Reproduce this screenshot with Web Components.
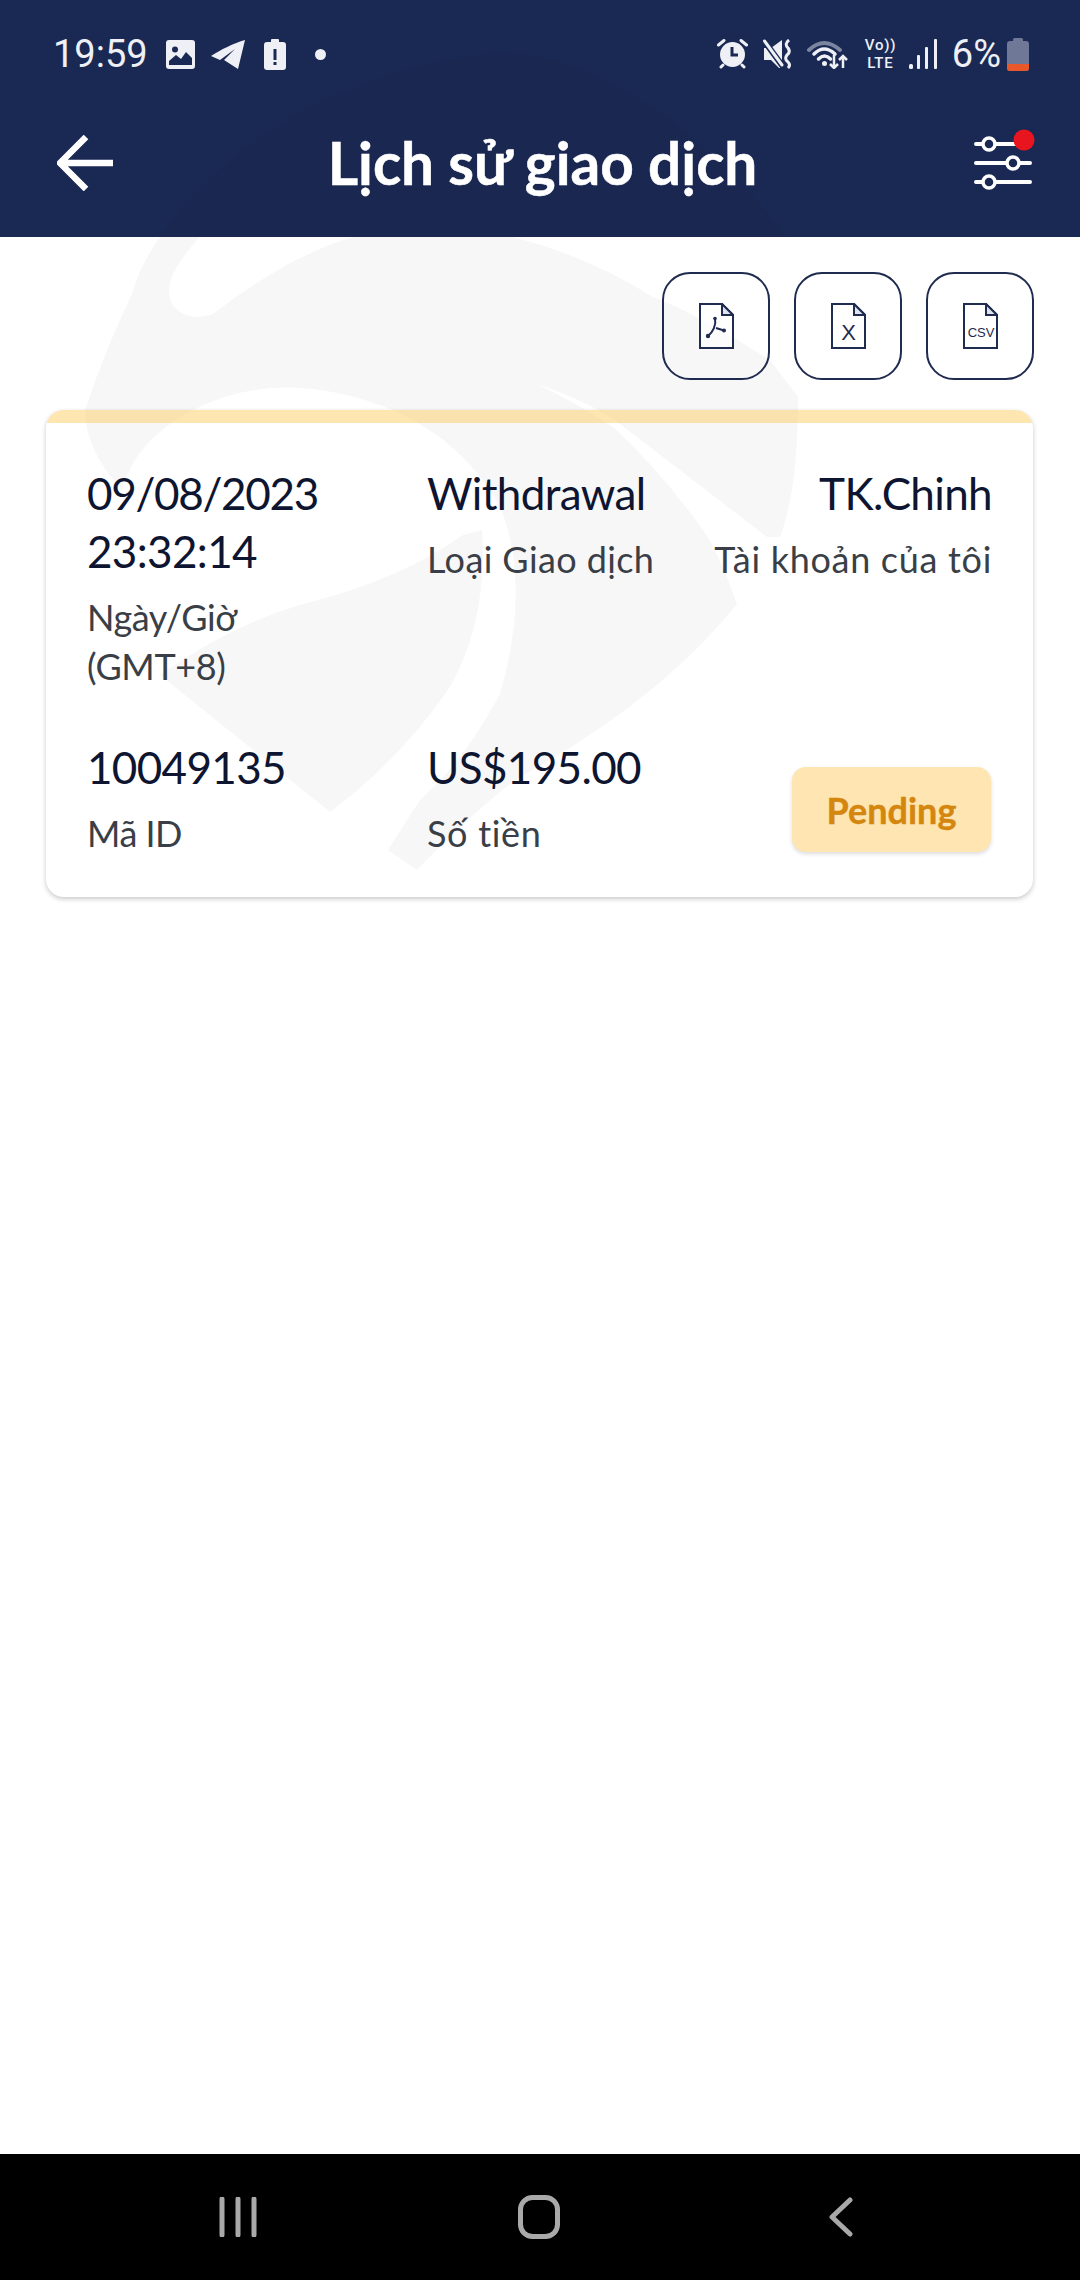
<!DOCTYPE html>
<html lang="vi">
<head>
<meta charset="utf-8">
<title>Lịch sử giao dịch</title>
<style>
    html, body { margin: 0; padding: 0; background: #fff; }
</style>
</head>
<body>
<history-page>
    <app-header slot="header" title-text="Lịch sử giao dịch"></app-header>
    <export-bar>
        <export-button kind="pdf"></export-button>
        <export-button kind="xls"></export-button>
        <export-button kind="csv"></export-button>
    </export-bar>
    <tx-card>
        <tx-field label="Ngày/Giờ (GMT+8)" style="--label-width: 150px; --label-spacing: -.4px; --value-width: 250px"><span style="letter-spacing: -1.3px">09/08/2023</span> 23:32:14</tx-field>
        <tx-field label="Loại Giao dịch" style="--label-spacing: .4px">Withdrawal</tx-field>
        <tx-field label="Tài khoản của tôi" align="right" style="--label-spacing: .7px">TK.Chinh</tx-field>
        <tx-field label="Mã ID" style="--label-spacing: -.5px">10049135</tx-field>
        <tx-field label="Số tiền" style="--label-spacing: .7px">US$195.00</tx-field>
        <status-badge>Pending</status-badge>
    </tx-card>
    <nav-bar slot="footer"></nav-bar>
</history-page>

<script>
const FONT = `Lato, 'Noto Sans', sans-serif`;

const pageTemplate = document.createElement('template');
pageTemplate.innerHTML = `
    <style>
        :host {
            display: flex;
            flex-direction: column;
            position: relative;
            width: 1080px;
            height: 2280px;
            overflow: hidden;
            background: #fff;
        }
        .watermark {
            position: absolute;
            left: 0;
            top: 0;
            width: 1080px;
            height: 900px;
        }
        main {
            position: relative;
            flex: 1;
            display: flex;
            flex-direction: column;
            gap: 31px;
            padding: 35px 47px 0 46px;
        }
    </style>
    <slot name="header"></slot>
    <svg class="watermark" viewBox="0 0 1080 900">
        <path fill="#f7f7f8" d="M160 237 Q140 265 132 294 Q105 350 85 410 Q85 450 122 490 Q135 440 193 410 Q280 365 393 410 Q470 445 503 514 Q530 590 500 694 Q465 760 420 800 L388 850 L417 870 Q480 805 520 777 Q660 700 737 604 Q720 555 703 530 Q660 470 613 427 Q575 402 537 384 Q590 402 620 424 L767 537 L780 537 Q798 490 798 397 L770 360 Q690 310 653 297 Q590 257 513 237 L353 237 Q290 255 213 314 Q190 322 175 308 Q155 285 200 237 Z"/>
        <path fill="#f7f7f8" d="M160 675 Q230 625 303 604 Q400 580 463 535 L482 530 Q488 620 450 687 Q400 760 330 812 Z"/>
    </svg>
    <main><slot></slot></main>
    <slot name="footer"></slot>
`;

class HistoryPage extends HTMLElement {
    constructor() {
        super();
        this.attachShadow({ mode: 'open' });
        this.shadowRoot.appendChild(pageTemplate.content.cloneNode(true));
    }
}

const headerTemplate = document.createElement('template');
headerTemplate.innerHTML = `
    <style>
        :host {
            display: block;
            position: relative;
            height: 237px;
            background: #1a2954;
            color: #eef0f5;
            overflow: hidden;
        }
        .shade { position: absolute; left: 0; top: 0; }
        .status {
            position: relative;
            display: flex;
            align-items: center;
            height: 108px;
            padding: 0 51px 0 53px;
            font-family: Roboto, sans-serif;
            font-size: 38px;
        }
        .status svg { display: block; flex: none; }
        .left, .right { display: flex; align-items: center; }
        .right { margin-left: auto; }
        .lte {
            font-weight: 500;
            font-size: 15px;
            line-height: 18px;
            letter-spacing: .8px;
            text-align: center;
            width: 31px;
            margin: 0 13px 0 17px;
        }
        .bar {
            position: relative;
            display: flex;
            align-items: center;
            height: 110px;
            padding: 0 48px 19px 57px;
        }
        .bar h1 {
            flex: 1;
            margin: 0 0 3px;
            color: #fff;
            text-align: center;
            font-family: ${FONT};
            font-size: 58.5px;
            font-weight: 700;
            -webkit-text-stroke: .5px #fff;
        }
    </style>
    <svg class="shade" width="1080" height="237" viewBox="0 0 1080 237">
        <path fill="#192751" d="M160 237 Q200 180 267 133 Q367 70 480 55 Q552 45 640 100 Q730 160 785 237 Z"/>
    </svg>
    <div class="status">
        <div class="left">
            <span class="time">19:59</span>
            <svg width="29" height="29" viewBox="0 0 29 29" style="margin-left:18px">
                <rect width="29" height="29" rx="3" fill="#eef0f5"/>
                <circle cx="9" cy="9.5" r="3" fill="#1a2954"/>
                <path d="M3 25 V21 L10 15 L15 19 L20 12 L26 18 V25 Z" fill="#1a2954"/>
            </svg>
            <svg width="35" height="30" viewBox="0 0 35 30" style="margin-left:15px">
                <path fill="#eef0f5" d="M1 17 C10 11 24 4 35 1 L28 30 L14 21 L25 10 L10 21 Z"/>
            </svg>
            <svg width="22" height="31" viewBox="0 0 22 31" style="margin-left:19px">
                <rect x="7" width="8" height="5" rx="1" fill="#eef0f5"/>
                <rect y="3" width="22" height="28" rx="3" fill="#eef0f5"/>
                <rect x="9.5" y="10" width="3" height="11" fill="#1a2954"/>
                <rect x="9.5" y="23" width="3" height="3" fill="#1a2954"/>
            </svg>
            <svg width="11" height="11" viewBox="0 0 11 11" style="margin-left:29px">
                <circle cx="5.5" cy="5.5" r="5.5" fill="#eef0f5"/>
            </svg>
        </div>
        <div class="right">
            <svg width="31" height="30" viewBox="0 0 31 30">
                <circle cx="15.5" cy="15.5" r="12.5" fill="#eef0f5"/>
                <path d="M15 8 V16 H21" fill="none" stroke="#1a2954" stroke-width="3"/>
                <path d="M1.5 6 L7 1.5 M29.5 6 L24 1.5 M6 26 L4 28 M25 26 L27 28" stroke="#eef0f5" stroke-width="3" stroke-linecap="round"/>
            </svg>
            <svg width="29" height="30" viewBox="0 0 29 30" style="margin-left:15px">
                <path fill="#eef0f5" d="M1 9 H8 L19 1 V29 H16 L8 21 H1 Z"/>
                <path d="M2 3 L21 29" stroke="#1a2954" stroke-width="6"/>
                <path d="M1.5 2 L19 26" stroke="#eef0f5" stroke-width="3" stroke-linecap="round"/>
                <path d="M26 1 Q21 5 25 9 Q28 13 24 16 Q21 20 25 23 Q28 26 25 29" fill="none" stroke="#eef0f5" stroke-width="3"/>
            </svg>
            <svg width="41" height="30" viewBox="0 0 41 30" style="margin-left:15px">
                <path d="M2 11 Q17 -3 33 11" fill="none" stroke="#7c859f" stroke-width="4" stroke-linecap="round"/>
                <path d="M7 15 Q17 5 28 15 M11.5 20 Q17.5 14 23.5 20" fill="none" stroke="#eef0f5" stroke-width="3.5" stroke-linecap="round"/>
                <circle cx="17.5" cy="24.5" r="2.5" fill="#eef0f5"/>
                <path d="M27 16 V29 M23 25 L27 29 L31 25 M36 29 V17 M32 21 L36 17 L40 21" fill="none" stroke="#eef0f5" stroke-width="2.5"/>
            </svg>
            <div class="lte">Vo))<br>LTE</div>
            <svg width="28" height="30" viewBox="0 0 28 30">
                <rect x="0" y="25" width="4" height="5" rx="1.5" fill="#eef0f5"/>
                <rect x="8" y="16" width="3" height="14" rx="1" fill="#eef0f5"/>
                <rect x="16" y="8" width="3" height="22" rx="1" fill="#eef0f5"/>
                <rect x="25" y="0" width="3" height="30" rx="1" fill="#eef0f5"/>
            </svg>
            <span style="margin-left:15px">6%</span>
            <svg width="22" height="33" viewBox="0 0 22 33" style="margin-left:6px">
                <rect x="6" width="10" height="5" rx="1.5" fill="#6f7896"/>
                <rect y="3" width="22" height="30" rx="3" fill="#6f7896"/>
                <path d="M0 26 H22 V30 A3 3 0 0 1 19 33 H3 A3 3 0 0 1 0 30 Z" fill="#e8582a"/>
            </svg>
        </div>
    </div>
    <div class="bar">
        <svg width="56" height="56" viewBox="0 0 56 56">
            <path d="M56 28 H4 M29 2 L3 28 L29 54" fill="none" stroke="#fff" stroke-width="6.5"/>
        </svg>
        <h1></h1>
        <svg width="60" height="60" viewBox="0 0 60 60" style="overflow:visible">
            <g fill="none" stroke="#fff" stroke-width="4" stroke-linecap="round">
                <path d="M4 11 H52 M4 30 H58 M4 49 H58"/>
                <circle cx="17" cy="11" r="6" fill="#1a2954" stroke-width="3.5"/>
                <circle cx="41" cy="30" r="6" fill="#1a2954" stroke-width="3.5"/>
                <circle cx="17" cy="49" r="6" fill="#1a2954" stroke-width="3.5"/>
            </g>
            <circle cx="52" cy="7" r="10.5" fill="#e8141e"/>
        </svg>
    </div>
`;

class AppHeader extends HTMLElement {
    constructor() {
        super();
        this.attachShadow({ mode: 'open' });
        this.shadowRoot.appendChild(headerTemplate.content.cloneNode(true));
        this.shadowRoot.querySelector('h1').textContent = this.getAttribute('title-text');
    }
}

const exportBarTemplate = document.createElement('template');
exportBarTemplate.innerHTML = `
    <style>
        :host {
            display: flex;
            justify-content: flex-end;
            gap: 24px;
            margin-right: -1px;
        }
    </style>
    <slot></slot>
`;

class ExportBar extends HTMLElement {
    constructor() {
        super();
        this.attachShadow({ mode: 'open' });
        this.shadowRoot.appendChild(exportBarTemplate.content.cloneNode(true));
    }
}

const exportMarks = {
    pdf: `<path d="M16 15 C17.5 22 14 29 9 33 M17 25 L25 27.5" fill="none" stroke="#1f2b4f" stroke-width="2"/>
          <circle cx="16" cy="15.5" r="1.8" fill="#1f2b4f"/>
          <circle cx="9" cy="33" r="2.2" fill="#1f2b4f"/>
          <circle cx="25" cy="27.5" r="2" fill="#1f2b4f"/>`,
    xls: `<text x="17.5" y="37" text-anchor="middle" font-family="'Liberation Sans', sans-serif" font-size="22" fill="#1f2b4f">X</text>`,
    csv: `<text x="18" y="34" text-anchor="middle" font-family="'Liberation Sans', sans-serif" font-size="13" fill="#1f2b4f">CSV</text>`
};

class ExportButton extends HTMLElement {
    constructor() {
        super();
        this.attachShadow({ mode: 'open' });
        this.shadowRoot.innerHTML = `
            <style>
                :host {
                    display: flex;
                    align-items: center;
                    justify-content: center;
                    box-sizing: border-box;
                    width: 108px;
                    height: 108px;
                    border: 2px solid #1f2b4f;
                    border-radius: 28px;
                }
            </style>
            <svg width="35" height="46" viewBox="0 0 35 46">
                <path d="M1 1 H23 L34 12 V45 H1 Z" fill="#fff" fill-opacity=".6" stroke="#1f2b4f" stroke-width="2"/>
                <path d="M23 1 V12 H34 Z" fill="#dfe3ee" stroke="#1f2b4f" stroke-width="2"/>
                ${exportMarks[this.getAttribute('kind')]}
            </svg>
        `;
    }
}

const cardTemplate = document.createElement('template');
cardTemplate.innerHTML = `
    <style>
        :host {
            display: block;
            margin-top: -1px;
            border-radius: 18px;
            box-shadow: 0 2px 5px rgba(0, 0, 0, .22);
            overflow: hidden;
        }
        .band {
            height: 13px;
            background: rgba(253, 205, 100, .5);
        }
        .grid {
            display: grid;
            grid-template-columns: 340px 1fr auto;
            row-gap: 47px;
            padding: 41px 41px 39px 41px;
        }
    </style>
    <div class="band"></div>
    <div class="grid"><slot></slot></div>
`;

class TxCard extends HTMLElement {
    constructor() {
        super();
        this.attachShadow({ mode: 'open' });
        this.shadowRoot.appendChild(cardTemplate.content.cloneNode(true));
    }
}

const fieldTemplate = document.createElement('template');
fieldTemplate.innerHTML = `
    <style>
        :host {
            display: block;
            font-family: ${FONT};
        }
        :host([align="right"]) { text-align: right; }
        .value {
            max-width: var(--value-width, none);
            font-size: 44px;
            line-height: 58px;
            letter-spacing: -.65px;
            color: #0e1530;
        }
        .label {
            margin-top: 13px;
            max-width: var(--label-width, none);
            font-size: 36px;
            line-height: 49px;
            letter-spacing: var(--label-spacing, 0);
            color: #3a3f47;
        }
    </style>
    <div class="value"><slot></slot></div>
    <div class="label"></div>
`;

class TxField extends HTMLElement {
    constructor() {
        super();
        this.attachShadow({ mode: 'open' });
        this.shadowRoot.appendChild(fieldTemplate.content.cloneNode(true));
        this.shadowRoot.querySelector('.label').textContent = this.getAttribute('label');
    }
}

const badgeTemplate = document.createElement('template');
badgeTemplate.innerHTML = `
    <style>
        :host {
            display: flex;
            align-items: center;
            justify-content: center;
            align-self: end;
            justify-self: end;
            width: 199px;
            height: 85px;
            margin: 0 1px 6px 0;
            border-radius: 14px;
            background: #fee5b1;
            box-shadow: 0 2px 4px rgba(0, 0, 0, .14);
            color: #d5860f;
            font-family: ${FONT};
            font-size: 36px;
            font-weight: 700;
            -webkit-text-stroke: .4px #d5860f;
        }
    </style>
    <slot></slot>
`;

class StatusBadge extends HTMLElement {
    constructor() {
        super();
        this.attachShadow({ mode: 'open' });
        this.shadowRoot.appendChild(badgeTemplate.content.cloneNode(true));
    }
}

const navTemplate = document.createElement('template');
navTemplate.innerHTML = `
    <style>
        :host {
            display: grid;
            grid-template-columns: 301px 301px 301px;
            justify-content: center;
            justify-items: center;
            align-items: center;
            height: 126px;
            padding-right: 2px;
            background: #000;
        }
        svg { display: block; }
    </style>
    <svg width="38" height="40" viewBox="0 0 38 40">
        <path d="M3 2 V38 M19 2 V38 M35 2 V38" stroke="#a9a9a9" stroke-width="5" stroke-linecap="round"/>
    </svg>
    <svg width="42" height="44" viewBox="0 0 42 44">
        <rect x="2.5" y="2.5" width="37" height="39" rx="12" fill="none" stroke="#a9a9a9" stroke-width="5"/>
    </svg>
    <svg width="25" height="40" viewBox="0 0 25 40">
        <path d="M22 3 L4 20 L22 37" fill="none" stroke="#a9a9a9" stroke-width="5" stroke-linecap="round" stroke-linejoin="round"/>
    </svg>
`;

class NavBar extends HTMLElement {
    constructor() {
        super();
        this.attachShadow({ mode: 'open' });
        this.shadowRoot.appendChild(navTemplate.content.cloneNode(true));
    }
}

const elements = [
    { a: 'history-page', b: HistoryPage },
    { a: 'app-header', b: AppHeader },
    { a: 'export-bar', b: ExportBar },
    { a: 'export-button', b: ExportButton },
    { a: 'tx-card', b: TxCard },
    { a: 'tx-field', b: TxField },
    { a: 'status-badge', b: StatusBadge },
    { a: 'nav-bar', b: NavBar }
];

elements.map(item => {
    window.customElements.define(item.a, item.b);
});
</script>
</body>
</html>
